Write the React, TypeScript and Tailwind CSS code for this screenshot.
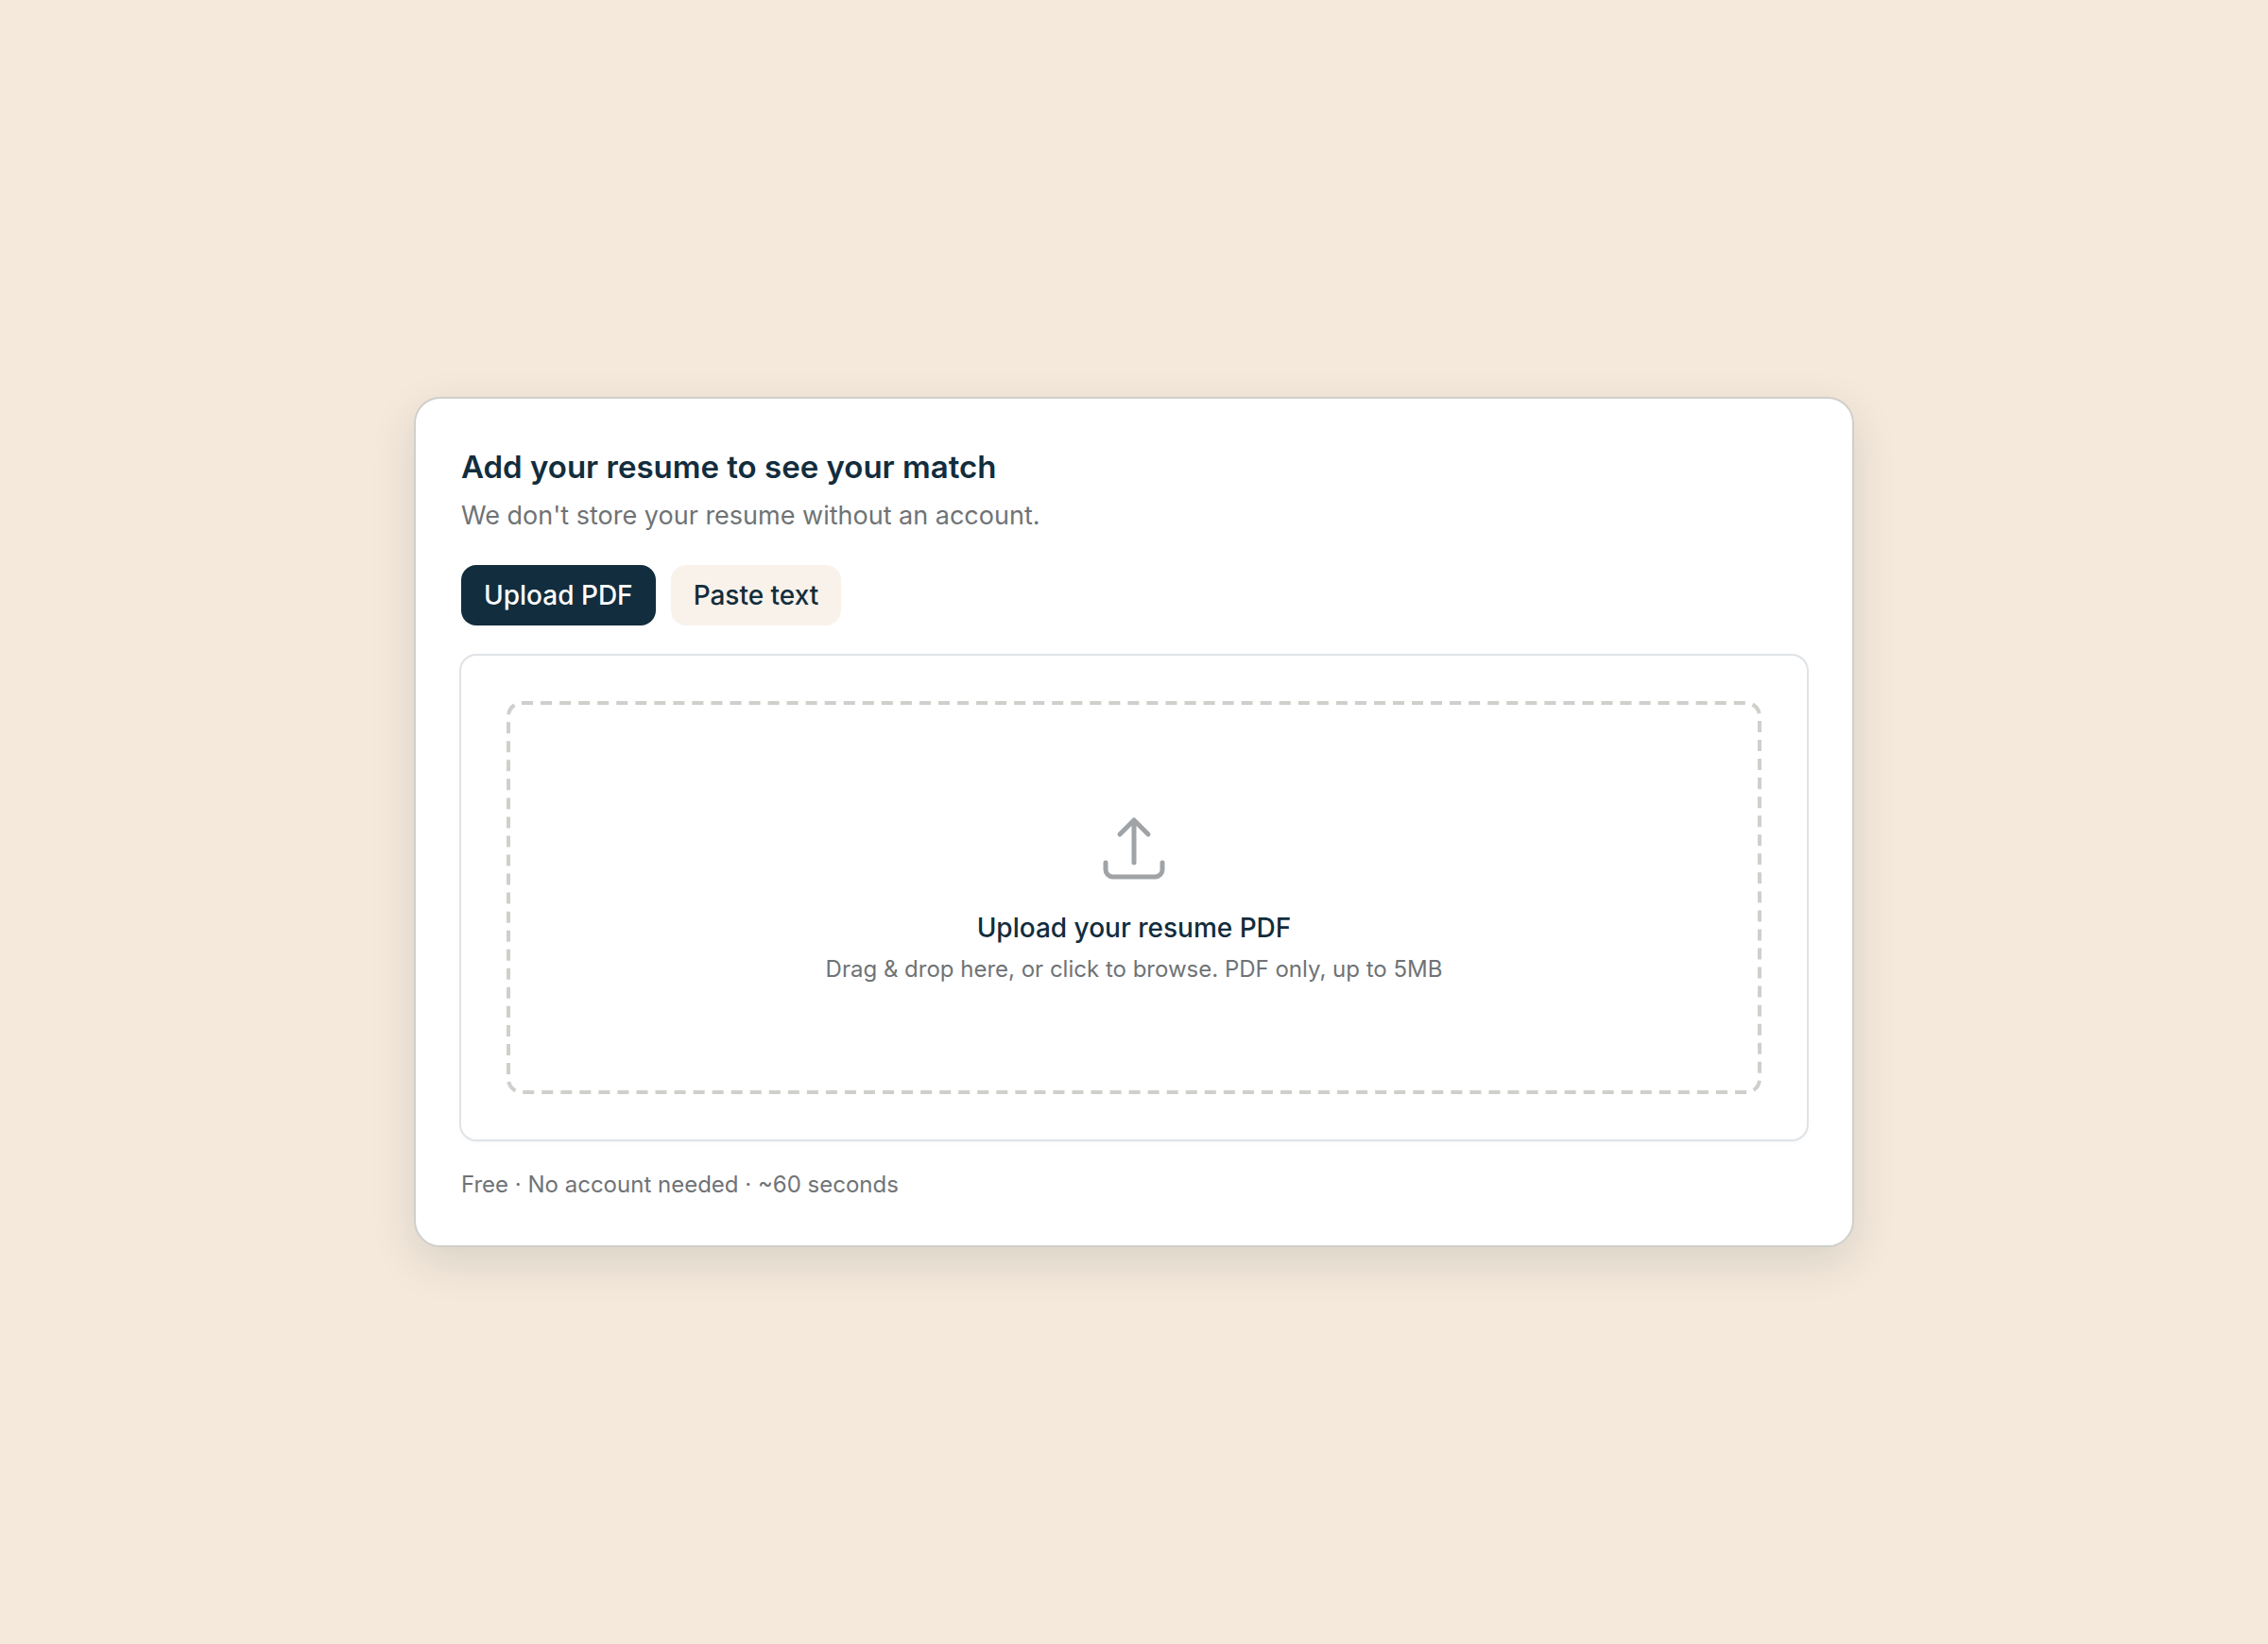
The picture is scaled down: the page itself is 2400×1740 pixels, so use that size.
import React, { useState } from "react";
import { clsx } from "clsx";

type Mode = "upload" | "paste";

interface ModeButtonProps {
  label: string;
  active: boolean;
  onClick: () => void;
}

function ModeButton({ label, active, onClick }: ModeButtonProps) {
  return (
    <button
      type="button"
      aria-pressed={active}
      onClick={onClick}
      className={clsx(
        "rounded-2xl px-6 py-3 text-[28px] leading-10 font-medium cursor-pointer",
        active ? "bg-[#122d3d] text-white" : "bg-[#f9f2eb] text-[#122d3d]"
      )}
    >
      {label}
    </button>
  );
}

function UploadIcon() {
  return (
    <svg
      viewBox="0 0 24 24"
      fill="none"
      stroke="currentColor"
      strokeWidth="1.5"
      strokeLinecap="round"
      strokeLinejoin="round"
      aria-hidden="true"
      className="size-20 text-[#a0a4a7]"
    >
      <path d="M3 16.5v2.25A2.25 2.25 0 0 0 5.25 21h13.5A2.25 2.25 0 0 0 21 18.75V16.5m-13.5-9L12 3m0 0 4.5 4.5M12 3v13.5" />
    </svg>
  );
}

function DropZone() {
  return (
    <label className="relative flex flex-col items-center rounded-2xl px-6 py-[116px] text-center cursor-pointer">
      {/* pathLength keeps a whole number of dashes round the outline */}
      <svg className="absolute inset-0 size-full text-[#cfcfcb]" aria-hidden="true">
        <rect
          x="2"
          y="2"
          rx="14"
          fill="none"
          stroke="currentColor"
          strokeWidth="4"
          pathLength="3440"
          strokeDasharray="12 8"
          className="h-[calc(100%-4px)] w-[calc(100%-4px)]"
        />
      </svg>
      <input type="file" accept="application/pdf" className="sr-only" />
      <UploadIcon />
      <span className="mt-6 text-[28px] leading-10 font-medium text-[#122d3d]">
        Upload your resume PDF
      </span>
      <span className="mt-2 text-2xl text-[#6f7376]">
        Drag &amp; drop here, or click to browse. PDF only, up to 5MB
      </span>
    </label>
  );
}

export default function App() {
  const [mode, setMode] = useState<Mode>("upload");

  return (
    <main className="flex min-h-screen items-center justify-center bg-[#f5e9db] p-6 font-['Inter',sans-serif]">
      <section className="w-full max-w-[1524px] rounded-[28px] border-2 border-[#cfcfcb] bg-white p-12 shadow-[0_16px_48px_rgba(18,45,61,0.12)]">
        <h1 className="text-[33px] leading-[48px] font-semibold text-[#122d3d]">
          Add your resume to see your match
        </h1>
        <p className="mt-2 text-[27px] leading-10 text-[#6f7376]">
          We don't store your resume without an account.
        </p>

        <div className="mt-8 flex gap-4">
          <ModeButton label="Upload PDF" active={mode === "upload"} onClick={() => setMode("upload")} />
          <ModeButton label="Paste text" active={mode === "paste"} onClick={() => setMode("paste")} />
        </div>

        <div className="mt-8 rounded-2xl bg-white p-12 shadow-[0_0_0_2px_#dfe3e7,0_2px_6px_rgba(18,45,61,0.05)]">
          {mode === "upload" ? (
            <DropZone />
          ) : (
            <textarea
              aria-label="Resume text"
              className="h-[416px] w-full resize-none rounded-2xl border-4 border-[#cfcfcb] p-6 text-[28px] text-[#122d3d]"
            />
          )}
        </div>

        <p className="mt-8 text-2xl text-[#6f7376]">Free · No account needed · ~60 seconds</p>
      </section>
    </main>
  );
}
